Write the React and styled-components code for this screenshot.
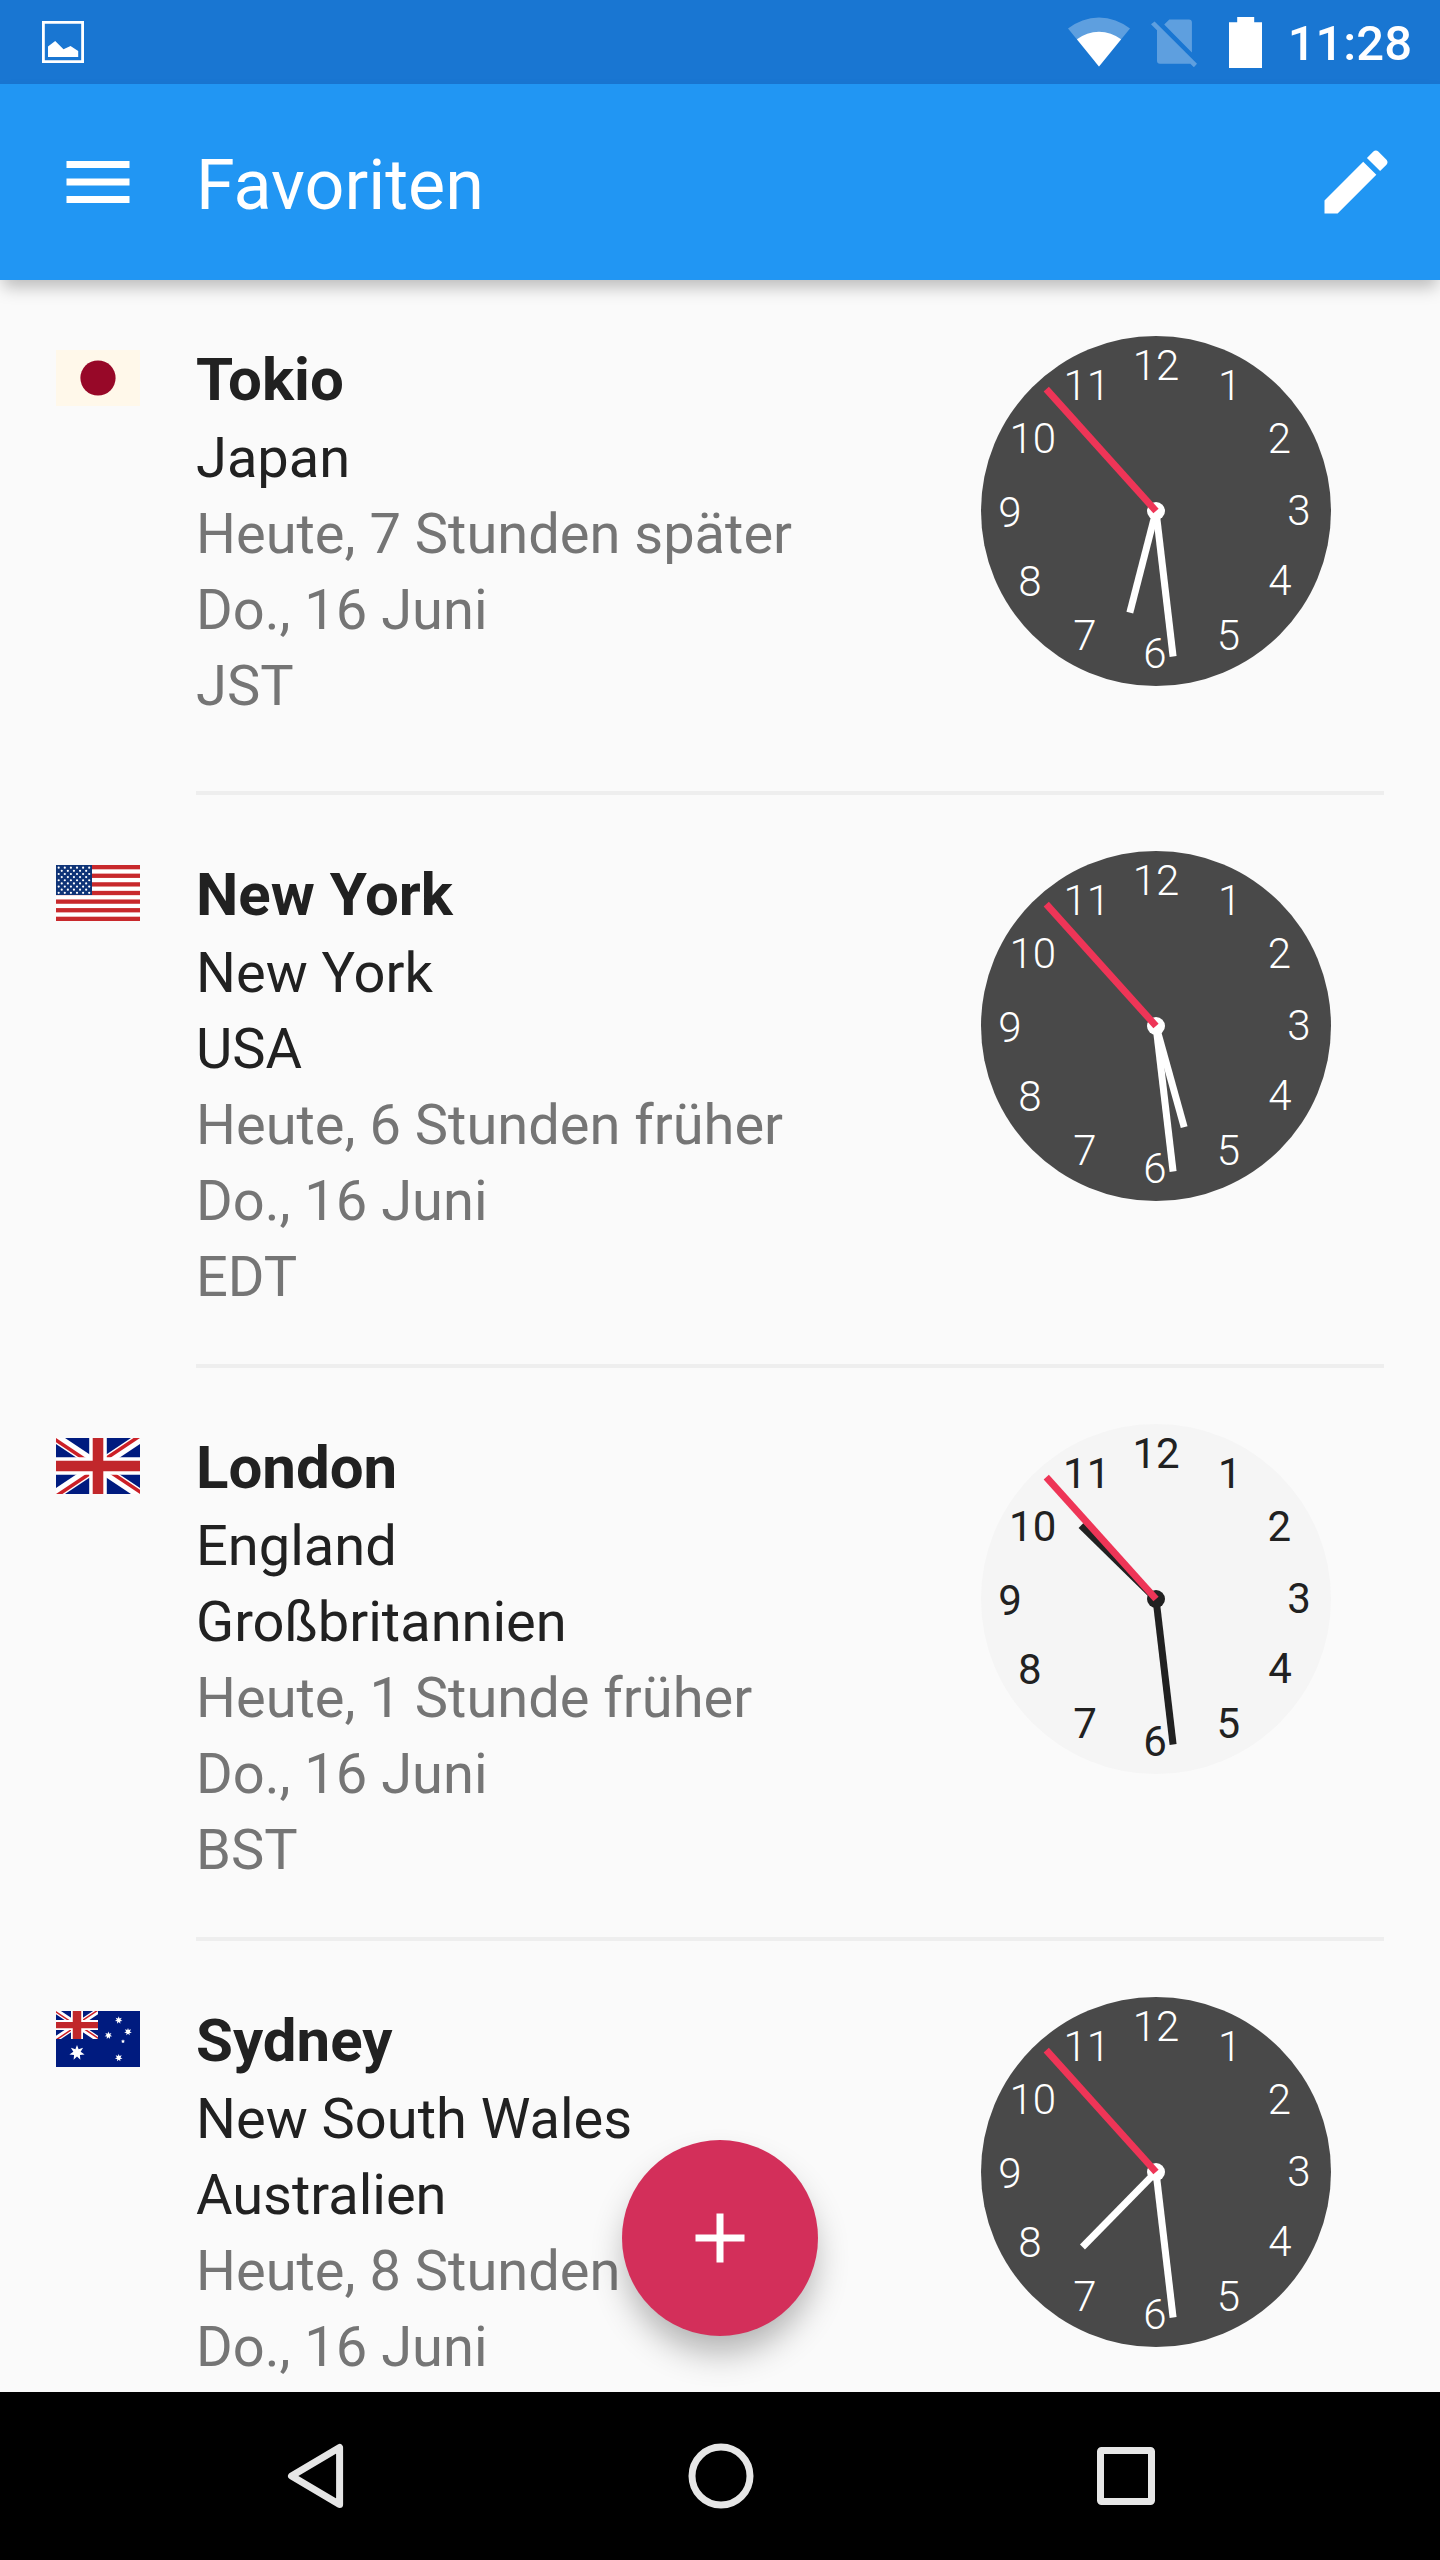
import styled, { createGlobalStyle, ThemeProvider } from 'styled-components';

const theme = {
  primary: '#2196f3',
  primaryDark: '#1976d2',
  accent: '#d32f5a',
  background: '#fafafa',
  divider: '#eeeeee',
  text: '#212121',
  textLight: '#757575',
};

const places = [
  {
    flag: 'jp',
    city: 'Tokio',
    region: ['Japan'],
    info: ['Heute, 7 Stunden später', 'Do., 16 Juni', 'JST'],
    hour: 6,
    night: true,
  },
  {
    flag: 'us',
    city: 'New York',
    region: ['New York', 'USA'],
    info: ['Heute, 6 Stunden früher', 'Do., 16 Juni', 'EDT'],
    hour: 5,
    night: true,
  },
  {
    flag: 'gb',
    city: 'London',
    region: ['England', 'Großbritannien'],
    info: ['Heute, 1 Stunde früher', 'Do., 16 Juni', 'BST'],
    hour: 10,
    night: false,
  },
  {
    flag: 'au',
    city: 'Sydney',
    region: ['New South Wales', 'Australien'],
    info: ['Heute, 8 Stunden später', 'Do., 16 Juni'],
    hour: 7,
    night: true,
  },
];

// x is the middle of the number, y its baseline
const numerals = [
  [12, 175, 44],
  [1, 248.7, 64],
  [2, 298.3, 117],
  [3, 318, 189.3],
  [4, 299, 259],
  [5, 247.3, 313.6],
  [6, 174, 332.2],
  [7, 104, 314],
  [8, 48.8, 260.3],
  [9, 29, 190.5],
  [10, 51.7, 117],
  [11, 105.7, 64],
];

const MINUTE = 28;
const SECOND = 53;

function Clock({ hour, night }) {
  const minutes = MINUTE + SECOND / 60;
  const hand = night ? '#ffffff' : '#212121';
  return (
    <Dial viewBox="0 0 350 350" $night={night}>
      <circle cx="175" cy="175" r="175" fill={night ? '#494949' : '#f5f5f5'} />
      {numerals.map(([n, x, y]) => (
        <text key={n} x={x} y={y}>{n}</text>
      ))}
      <circle cx="175" cy="175" r="9" fill={hand} />
      <g strokeWidth="7">
        <path d="M175 175V70" stroke={hand} transform={`rotate(${(hour + minutes / 60) * 30} 175 175)`} />
        <path d="M175 175V28.5" stroke={hand} transform={`rotate(${minutes * 6} 175 175)`} />
        <path d="M175 175V11" stroke="#ee3557" transform={`rotate(${SECOND * 6} 175 175)`} />
      </g>
    </Dial>
  );
}

function UnionJack({ id, cross = 10.6, border = 17.6, crossX = cross, borderX = border, saltire = 10, red = 3.6 }) {
  return (
    <>
      <clipPath id={`${id}-box`}>
        <path d="M0 0h84v56H0z" />
      </clipPath>
      <clipPath id={`${id}-pin`}>
        <path d="M42 28h42v28zv28H0zH0V0zV0h42z" />
      </clipPath>
      <g clipPath={`url(#${id}-box)`}>
        <path d="M0 0h84v56H0z" fill="#001b7f" />
        <path d="M0 0l84 56M84 0L0 56" stroke="#fff" strokeWidth={saltire} />
        <path d="M0 0l84 56M84 0L0 56" stroke="#cc2027" strokeWidth={red * 2} clipPath={`url(#${id}-pin)`} />
        <path d="M42 0v56" stroke="#fff" strokeWidth={borderX} />
        <path d="M0 28h84" stroke="#fff" strokeWidth={border} />
        <path d="M42 0v56" stroke="#c1272b" strokeWidth={crossX} />
        <path d="M0 28h84" stroke="#c1272b" strokeWidth={cross} />
      </g>
    </>
  );
}

function star(cx, cy, r, points = 7, inner = 0.48) {
  const out = [];
  for (let i = 0; i < points * 2; i++) {
    const a = (Math.PI * i) / points;
    const d = i % 2 ? r * inner : r;
    out.push(`${(cx + d * Math.sin(a)).toFixed(2)},${(cy - d * Math.cos(a)).toFixed(2)}`);
  }
  return out.join(' ');
}

function usStars() {
  const dots = [];
  for (let row = 0; row < 9; row++) {
    const odd = row % 2;
    for (let col = 0; col < (odd ? 5 : 6); col++) {
      dots.push([2.7 + col * 6.1 + (odd ? 3.05 : 0), 2.7 + row * 3.14]);
    }
  }
  return dots;
}

const flags = {
  jp: (
    <>
      <path d="M0 0h84v56H0z" fill="#fff8ea" />
      <circle cx="42" cy="28" r="17.6" fill="#970828" />
    </>
  ),
  us: (
    <>
      <path d="M0 0h84v56H0z" fill="#fff" />
      {[0, 1, 2, 3, 4, 5, 6].map((i) => (
        <rect key={i} y={i * 8.615} width="84" height="4.31" fill="#c8292c" />
      ))}
      <path d="M0 0h36v30H0z" fill="#0f3477" />
      {usStars().map(([x, y]) => (
        <circle key={`${x}-${y}`} cx={x} cy={y} r="1.1" fill="#fff" />
      ))}
    </>
  ),
  gb: <UnionJack id="gb" />,
  au: (
    <>
      <path d="M0 0h84v56H0z" fill="#001b7f" />
      <g transform="scale(.5)">
        <UnionJack id="au" cross={12.5} border={20} crossX={17} borderX={24} saltire={11} red={3} />
      </g>
      <g fill="#fff">
        <polygon points={star(21, 41.7, 7.8)} />
        <polygon points={star(62.7, 9.2, 3.9)} />
        <polygon points={star(72, 20.8, 3.9)} />
        <polygon points={star(52.4, 24.4, 3.9)} />
        <polygon points={star(67, 30.4, 2.1, 5)} />
        <polygon points={star(62.7, 46.8, 3.9)} />
      </g>
    </>
  ),
};

export default function App() {
  return (
    <ThemeProvider theme={theme}>
      <GlobalStyle />
      <Screen>
        <StatusBar>
          <svg width="42" height="42" viewBox="0 0 42 42">
            <path d="M1.4 1.4h39.2v39.2H1.4z" fill="none" stroke="#fff" strokeWidth="2.8" />
            <path d="M6 25.5L13.2 20l8.3 8.2 7-3.2 7.7 5V36H6z" fill="#fff" />
          </svg>
          <StatusIcons>
            <svg width="62" height="50" viewBox="0 0 62 50">
              <path d="M0 11.5a49.5 49.5 0 0 1 62 0L31 49.5z" fill="#fff" opacity=".3" />
              <path d="M8.9 22.3a35.8 35.8 0 0 1 44.2 0L31 49.5z" fill="#fff" />
            </svg>
            <svg width="46" height="50" viewBox="0 0 46 50">
              <path
                d="M3.6 4.4L46 46.8l-3.1 3.4-3.6-3.5H9a3 3 0 0 1-3-3V13.2L0 7.2zM13.2 7.6l5.1-5.1h19.6a3 3 0 0 1 3 3v30z"
                fill="#fff"
                opacity=".3"
              />
            </svg>
            <svg width="33" height="51" viewBox="0 0 33 51">
              <path d="M8.2 0h17v5.3H33V51H0V5.3h8.2z" fill="#fff" />
            </svg>
          </StatusIcons>
          <Time>11:28</Time>
        </StatusBar>

        <Toolbar>
          <svg width="84" height="84" viewBox="0 0 24 24" fill="#fff">
            <path d="M3 18h18v-2H3v2zm0-5h18v-2H3v2zm0-7v2h18V6H3z" />
          </svg>
          <Title>Favoriten</Title>
          <svg width="84" height="84" viewBox="0 0 24 24" fill="#fff">
            <path d="M3 17.25V21h3.75L17.81 9.94l-3.75-3.75L3 17.25zM20.71 7.04c.39-.39.39-1.02 0-1.41l-2.34-2.34c-.39-.39-1.02-.39-1.41 0l-1.83 1.83 3.75 3.75 1.83-1.83z" />
          </svg>
        </Toolbar>

        <List>
          {places.map((place) => (
            <Row key={place.city}>
              <Flag viewBox="0 0 84 56">{flags[place.flag]}</Flag>
              <Body>
                <Details>
                  <City>{place.city}</City>
                  {place.region.map((line) => <Line key={line}>{line}</Line>)}
                  {place.info.map((line) => <Line key={line} $light>{line}</Line>)}
                </Details>
                <Clock hour={place.hour} night={place.night} />
              </Body>
            </Row>
          ))}
          <AddButton aria-label="Hinzufügen">
            <svg width="84" height="84" viewBox="0 0 24 24" fill="#fff">
              <path d="M19 13h-6v6h-2v-6H5v-2h6V5h2v6h6v2z" />
            </svg>
          </AddButton>
        </List>

        <NavBar>
          <svg width="66" height="66" viewBox="0 0 66 66">
            <path d="M57.6 4.5v57L9.5 33z" />
          </svg>
          <svg width="66" height="66" viewBox="0 0 66 66">
            <circle cx="33" cy="33" r="29" />
          </svg>
          <svg width="66" height="66" viewBox="0 0 66 66">
            <rect x="7.5" y="7.5" width="51" height="51" rx="1" />
          </svg>
        </NavBar>
      </Screen>
    </ThemeProvider>
  );
}

const GlobalStyle = createGlobalStyle`
  * {
    box-sizing: border-box;
  }

  body {
    margin: 0;
    font-family: Roboto, 'Liberation Sans', sans-serif;
  }

  svg {
    display: block;
    flex-shrink: 0;
  }
`;

const Screen = styled.div`
  display: flex;
  flex-direction: column;
  width: 1440px;
  height: 2560px;
  overflow: hidden;
  background: ${props => props.theme.background};
`;

const StatusBar = styled.header`
  display: flex;
  align-items: center;
  flex-shrink: 0;
  height: 84px;
  padding: 0 28px 0 42px;
  color: #fff;
  background: ${props => props.theme.primaryDark};
`;

const StatusIcons = styled.div`
  display: flex;
  align-items: center;
  margin-left: auto;

  svg + svg {
    margin-left: 21px;
  }

  svg:last-child {
    margin-left: 32px;
  }
`;

const Time = styled.span`
  margin-left: 26px;
  font-size: 49px;
  font-weight: 500;
  line-height: 84px;
  padding-top: 4px;
`;

const Toolbar = styled.div`
  display: flex;
  align-items: center;
  flex-shrink: 0;
  height: 196px;
  padding: 0 42px 0 56px;
  position: relative;
  z-index: 1;
  color: #fff;
  background: ${props => props.theme.primary};
  box-shadow: 0 10px 16px -3px rgba(0, 0, 0, 0.26);
`;

const Title = styled.h1`
  flex: 1;
  margin: 0 0 0 56px;
  padding-top: 6px;
  font-size: 70px;
  font-weight: 400;
  line-height: 82px;
`;

const List = styled.main`
  flex: 1;
  min-height: 0;
  position: relative;
  overflow: hidden;
`;

const Row = styled.section`
  display: flex;
  padding: 0 56px;
`;

const Flag = styled.svg`
  width: 84px;
  height: 56px;
  margin: 70px 56px 0 0;
`;

const Body = styled.div`
  display: flex;
  flex: 1;
  align-items: flex-start;
  justify-content: space-between;
  border-bottom: 4px solid ${props => props.theme.divider};
`;

const Details = styled.div`
  padding: 60px 0 49px;
`;

const City = styled.h2`
  margin: 0;
  font-size: 60px;
  font-weight: 700;
  line-height: 80px;
  color: ${props => props.theme.text};
`;

const Line = styled.div`
  font-size: 56px;
  line-height: 76px;
  white-space: nowrap;
  color: ${props => (props.$light ? props.theme.textLight : props.theme.text)};
`;

const Dial = styled.svg`
  width: 350px;
  height: 350px;
  margin: 56px 53px 105px 0;

  text {
    font-size: 42px;
    font-weight: ${props => (props.$night ? 300 : 400)};
    text-anchor: middle;
    fill: ${props => (props.$night ? '#fff' : '#212121')};
  }
`;

const AddButton = styled.button`
  display: flex;
  align-items: center;
  justify-content: center;
  position: absolute;
  left: 50%;
  bottom: 56px;
  width: 196px;
  height: 196px;
  margin-left: -98px;
  padding: 0;
  border: none;
  border-radius: 50%;
  background: ${props => props.theme.accent};
  box-shadow: 0 20px 34px -4px rgba(0, 0, 0, 0.3);
`;

const NavBar = styled.nav`
  display: flex;
  align-items: center;
  justify-content: space-between;
  flex-shrink: 0;
  height: 168px;
  padding: 0 281px 0 282px;
  background: #000;

  svg {
    fill: none;
    stroke: #e6e6e6;
    stroke-width: 7px;
    stroke-linejoin: round;
  }
`;
